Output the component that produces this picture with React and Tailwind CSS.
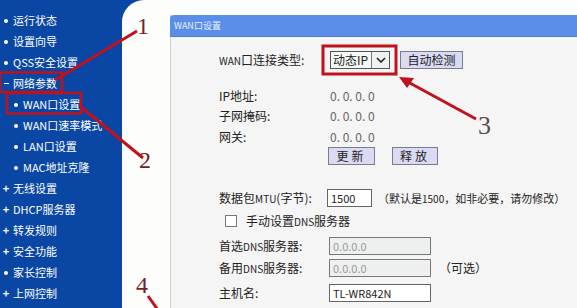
import React from "react";

const font = { fontFamily: '"Noto Sans CJK SC", "Noto Sans", sans-serif' };

function Mark({ type }) {
  if (type === "dot")
    return (
      <span className="w-[10px] flex justify-center">
        <span className="w-[4px] h-[4px] rounded-full bg-white" />
      </span>
    );
  if (type === "plus")
    return (
      <span className="w-[10px] flex justify-center text-[11px] font-bold leading-none">+</span>
    );
  return (
    <span className="w-[10px] flex justify-center">
      <span className="w-[5px] h-[1.5px] bg-white" />
    </span>
  );
}

const items = [
  { t: "运行状态", m: "dot" },
  { t: "设置向导", m: "dot" },
  { t: "QSS安全设置", m: "dot" },
  { t: "网络参数", m: "minus" },
  { t: "WAN口设置", m: "dot", sub: true },
  { t: "WAN口速率模式", m: "dot", sub: true },
  { t: "LAN口设置", m: "dot", sub: true },
  { t: "MAC地址克隆", m: "dot", sub: true },
  { t: "无线设置", m: "plus" },
  { t: "DHCP服务器", m: "plus" },
  { t: "转发规则", m: "plus" },
  { t: "安全功能", m: "plus" },
  { t: "家长控制", m: "dot" },
  { t: "上网控制", m: "plus" },
];

function Btn({ children, w }) {
  return (
    <div
      className={`h-[18px] ${w} bg-[#dadaf2] border border-[#7a7a90] flex items-center justify-center text-[12px] text-[#222] tracking-[3px]`}
    >
      {children}
    </div>
  );
}

export default function App() {
  return (
    <div
      className="w-[577px] h-[308px] overflow-hidden relative flex bg-[#0a47a4] text-[12px]"
      style={font}
    >
      {/* sidebar */}
      <div className="w-[122px] shrink-0 pt-[10px] flex flex-col text-white">
        {items.map((it) => (
          <div
            key={it.t}
            className={`h-[21px] flex items-center ${it.sub ? "pl-[11px]" : "pl-[1px]"}`}
          >
            <Mark type={it.m} />
            <span className="ml-[2px] text-[11px] leading-none whitespace-nowrap">{it.t}</span>
          </div>
        ))}
      </div>

      {/* main white area */}
      <div className="flex-1 bg-[#fdfdfb] rounded-tl-[22px] flex">
        <div className="w-[48px] shrink-0" />
        <div className="flex-1 flex flex-col pt-[15px]">
          <div className="flex-1 flex flex-col border-l border-[#d6d0bc] bg-[#f5f5f5]">
            {/* header */}
            <div className="h-[22px] bg-[#5b8ee8] rounded-tl-[4px] border-b border-[#4b7ed6] flex items-center pl-[4px] -ml-px">
              <span className="text-[9px] text-[#e8efff] leading-none">WAN口设置</span>
            </div>
            <div className="pl-[48px] flex flex-col text-[#222]">
              <div className="mt-[14px] h-[18px] flex items-center">
                <span className="w-[109px] text-[12px] whitespace-nowrap">
                  <span className="text-[10px]">WAN</span>口连接类型:
                </span>
                <div className="ml-[2px] w-[60px] h-[18px] border border-[#555] bg-[#f4faf6] flex">
                  <span className="flex-1 flex items-center pl-[2px] text-[12px] leading-none">动态IP</span>
                  <span className="w-[18px] border-l border-[#777] flex items-center justify-center bg-[#eef2f2]">
                    <svg width="10" height="6" viewBox="0 0 10 6">
                      <path d="M1 1 L5 5 L9 1" stroke="#222" strokeWidth="1.6" fill="none" />
                    </svg>
                  </span>
                </div>
                <div className="ml-[10px]">
                  <Btn w="w-[63px]">
                    <span className="tracking-normal">自动检测</span>
                  </Btn>
                </div>
              </div>

              <div className="mt-[17px] h-[20px] flex items-center">
                <span className="w-[111px]">IP地址:</span>
                <span className="text-[#666]">0. 0. 0. 0</span>
              </div>
              <div className="h-[20px] flex items-center">
                <span className="w-[111px]">子网掩码:</span>
                <span className="text-[#666]">0. 0. 0. 0</span>
              </div>
              <div className="h-[21px] flex items-center">
                <span className="w-[111px]">网关:</span>
                <span className="text-[#666]">0. 0. 0. 0</span>
              </div>
              <div className="h-[18px] flex items-center pl-[109px] gap-[17px]">
                <Btn w="w-[47px]">更新</Btn>
                <Btn w="w-[46px]">释放</Btn>
              </div>

              <div className="mt-[24px] h-[18px] flex items-center">
                <span className="w-[108px] whitespace-nowrap">
                  数据包<span className="text-[10px]">MTU</span>(字节):
                </span>
                <div className="w-[45px] h-[18px] bg-white border border-[#666] flex items-center pl-[3px] text-[11px]">
                  1500
                </div>
                <span className="ml-[6px] text-[11px] whitespace-nowrap">（默认是<span className="text-[10px]">1500</span>，如非必要，请勿修改）</span>
              </div>

              <div className="mt-[5px] h-[18px] flex items-center pl-[6px]">
                <span className="w-[12px] h-[12px] border border-[#777] bg-white" />
                <span className="ml-[9px]">
                  手动设置<span className="text-[10px]">DNS</span>服务器
                </span>
              </div>

              <div className="mt-[7px] h-[18px] flex items-center">
                <span className="w-[110px]">
                  首选<span className="text-[10px]">DNS</span>服务器:
                </span>
                <div className="w-[102px] h-[18px] bg-[#eef0f0] border border-[#777] flex items-center pl-[3px] text-[11px] text-[#999]">
                  0.0.0.0
                </div>
              </div>
              <div className="mt-[4px] h-[18px] flex items-center">
                <span className="w-[110px]">
                  备用<span className="text-[10px]">DNS</span>服务器:
                </span>
                <div className="w-[102px] h-[18px] bg-[#eef0f0] border border-[#777] flex items-center pl-[3px] text-[11px] text-[#999]">
                  0.0.0.0
                </div>
                <span className="ml-[8px]">（可选）</span>
              </div>
              <div className="mt-[7px] h-[18px] flex items-center">
                <span className="w-[110px]">主机名:</span>
                <div className="w-[102px] h-[18px] bg-white border border-[#666] flex items-center pl-[3px] text-[11px]">
                  TL-WR842N
                </div>
              </div>
            </div>
          </div>
        </div>
      </div>

      {/* annotations overlay */}
      <svg className="absolute inset-0 pointer-events-none" width="577" height="308" viewBox="0 0 577 308">
        <g stroke="#c0121c" fill="none" strokeWidth="2.5">
          <rect x="0" y="72.5" width="62" height="19.5" />
          <rect x="7" y="93" width="74" height="20.5" />
          <rect x="323" y="46" width="73" height="28" strokeWidth="3" />
          <line x1="55" y1="80" x2="137" y2="31" strokeWidth="3" />
          <line x1="81" y1="107" x2="143" y2="158" strokeWidth="3" />
          <line x1="148" y1="296" x2="158" y2="310" strokeWidth="3" />
          <line x1="476" y1="119" x2="408" y2="82" strokeWidth="3" />
        </g>
        <path d="M399 77 L414 78 L407 88 Z" fill="#c0121c" />
      </svg>
      <span className="absolute left-[137px] top-[14px] text-[24px] leading-none text-[#6e2426]" style={{ fontFamily: '"Liberation Serif", serif' }}>1</span>
      <span className="absolute left-[139px] top-[148px] text-[24px] leading-none text-[#6e2426]" style={{ fontFamily: '"Liberation Serif", serif' }}>2</span>
      <span className="absolute left-[478px] top-[113px] text-[26px] leading-none text-[#5a4a50]" style={{ fontFamily: '"Liberation Serif", serif' }}>3</span>
      <span className="absolute left-[136px] top-[273px] text-[24px] leading-none text-[#6e2426]" style={{ fontFamily: '"Liberation Serif", serif' }}>4</span>
    </div>
  );
}
